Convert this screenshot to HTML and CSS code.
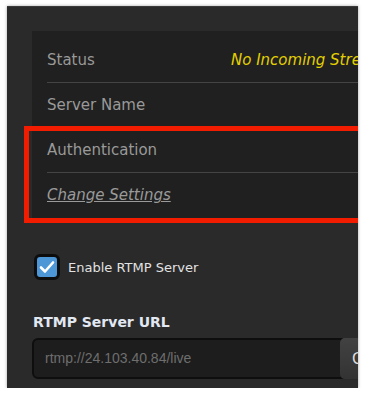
FILE: index.html
```html
<!DOCTYPE html>
<html lang="en">
<head>
  <meta charset="UTF-8" />
  <title>RTMP Server</title>
  <link rel="stylesheet" href="styles.css">
</head>
<body>
  <div class="shot">
    <div class="panel">
      <div class="row">
        <span class="label">Status</span>
        <span class="status">No Incoming Stream</span>
      </div>
      <div class="row">
        <span class="label">Server Name</span>
      </div>
      <div class="highlight">
        <div class="row">
          <span class="label">Authentication</span>
        </div>
        <div class="row last">
          <a class="link" href="#">Change Settings</a>
        </div>
      </div>
    </div>

    <label class="check-row">
      <span class="checkbox">
        <svg width="16" height="14" viewBox="0 0 16 14">
          <path d="M2 7.5 L6 11.5 L14 2.5" fill="none" stroke="#fff" stroke-width="2.6" stroke-linecap="round" stroke-linejoin="round"/>
        </svg>
      </span>
      <span class="check-label">Enable RTMP Server</span>
    </label>

    <div class="field-title">RTMP Server URL</div>
    <div class="url-row">
      <div class="url-input">rtmp://24.103.40.84/live</div>
      <button class="copy-button">Copy</button>
    </div>
  </div>
</body>
</html>
```

FILE: styles.css
```css
body {
  background: white;
  margin: 0;
  padding: 6px 0 0 7px;
  font-family: "DejaVu Sans", Verdana, sans-serif;
}

.shot {
  width: 351px;
  height: 382px;
  background: #2a2a2a;
  border-top: 1px solid #3a3a3a;
  box-sizing: border-box;
  overflow: hidden;
  box-shadow: 0 0 3px rgba(0, 0, 0, 0.35);
  padding-top: 24px;
}

.panel {
  margin-left: 25px;
  width: 360px;
  background: #202020;
  padding: 7px 0 4px 0;
}

.row {
  display: flex;
  align-items: center;
  height: 44px;
  margin-left: 15px;
  border-bottom: 1px solid #444;
  font-size: 15px;
}

.row.last {
  border-bottom: none;
}

.label {
  color: #999;
}

.status {
  color: #e3cf00;
  font-style: italic;
  margin-left: auto;
  white-space: nowrap;
  width: 161px;
}

.link {
  color: #9a9a9a;
  font-style: italic;
  text-decoration: underline;
}

.highlight {
  position: relative;
}

.highlight::before {
  content: "";
  position: absolute;
  left: -8px;
  top: -2px;
  right: -20px;
  bottom: -6px;
  border: 5px solid #f21d00;
  pointer-events: none;
}

.check-row {
  display: flex;
  align-items: center;
  gap: 8px;
  margin: 33px 0 0 27px;
}

.checkbox {
  width: 20px;
  height: 20px;
  border: 3px solid #0d0d0d;
  border-radius: 6px;
  background: #4d97d6;
  display: flex;
  align-items: center;
  justify-content: center;
}

.check-label {
  color: #e2e2e2;
  font-size: 13px;
}

.field-title {
  color: #e2e8f2;
  font-size: 14px;
  font-weight: bold;
  margin: 34px 0 0 26px;
}

.url-row {
  display: flex;
  margin: 8px 0 0 25px;
  gap: 2px;
  width: 400px;
}

.url-input {
  width: 300px;
  height: 37px;
  border: 2px solid #0e0e0e;
  border-radius: 6px;
  background: #1d1d1d;
  color: #6e6e6e;
  font-family: "Liberation Sans", Arial, sans-serif;
  font-size: 14px;
  line-height: 37px;
  padding-left: 11px;
  box-sizing: content-box;
  margin-right: -9px;
}

.copy-button {
  height: 41px;
  padding: 0 12px;
  border: none;
  border-radius: 5px;
  background: linear-gradient(#424242, #333);
  color: #ddd;
  font-family: "DejaVu Sans", sans-serif;
  font-size: 15px;
  text-align: left;
}
```
